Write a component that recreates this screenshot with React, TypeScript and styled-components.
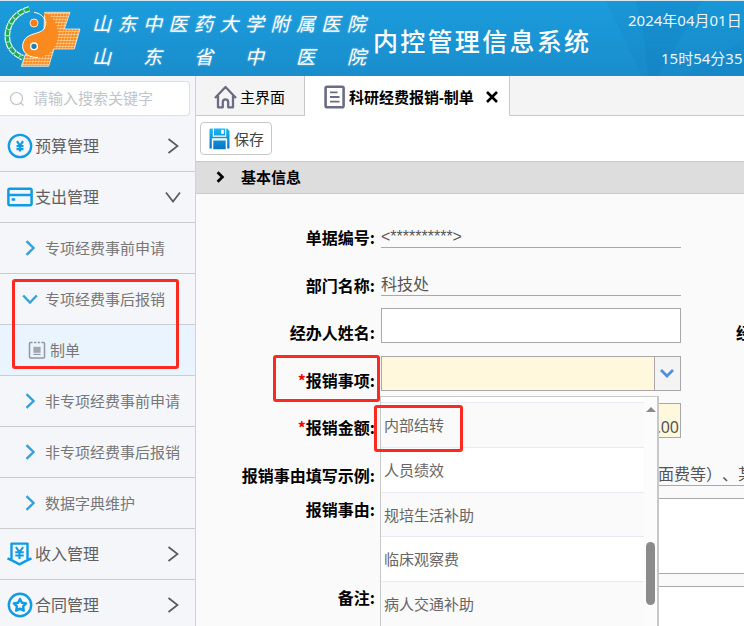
import React from "react";
import styled, { createGlobalStyle, css } from "styled-components";

const ui = `"Noto Sans", "Noto Sans CJK SC", sans-serif`;
const cjk = `"Noto Sans CJK SC", "Noto Sans", sans-serif`;

const GlobalStyle = createGlobalStyle`
  *, *::before, *::after { box-sizing: border-box; }
  body { margin: 0; overflow: hidden; font-family: ${ui}; font-size: 15px; color: #555; background: #fafafa; text-spacing-trim: space-all; }
  button, input, select, textarea { font: inherit; color: inherit; margin: 0; border-radius: 0; }
  button { cursor: pointer; }
  ul { list-style: none; margin: 0; padding: 0; }
`;

const Page = styled.div`
  display: flex;
  flex-direction: column;
  height: 100vh;
  overflow: hidden;
`;

const Header = styled.header`
  display: flex;
  flex: none;
  align-items: center;
  position: relative;
  height: 76px;
  padding-left: 4px;
  border-top: 1px solid #d5e6ee;
  color: #fff;
  background: linear-gradient(#1b9cdc, #1a8dcc);
  overflow: hidden;
`;

const Beams = styled.svg`
  position: absolute;
  top: 0;
  right: 0;
  width: 154px;
  height: 100%;
`;

const Hospital = styled.div`
  display: flex;
  flex-direction: column;
  gap: 7px;
  width: 274px;
  margin: 2px 0 0 10px;
  font: italic 400 19px/26px ${cjk};
  text-shadow: 0 0 2px rgba(255, 255, 255, 0.5);
`;

const SpreadLine = styled.span`
  display: flex;
  justify-content: space-between;
`;

const SystemTitle = styled.h1`
  width: 216px;
  margin: 2px 0 0 7px;
  font: 500 25px/36px ${cjk};
  white-space: nowrap;
`;

const Clock = styled.div`
  position: relative;
  display: flex;
  flex-direction: column;
  gap: 18px;
  width: 116px;
  margin-left: auto;
  line-height: 20px;
  white-space: nowrap;
  color: #eaf5fb;
`;

const ClockTime = styled.time`
  padding-left: 33px;
`;

const Body = styled.div`
  display: flex;
  flex: 1;
  min-height: 0;
`;

const Sidebar = styled.nav`
  flex: none;
  width: 196px;
  border-right: 1px solid #d2d2d6;
  background: #f4f6fa;
  overflow: hidden;
`;

const SearchBox = styled.label`
  display: flex;
  align-items: center;
  gap: 8px;
  height: 35px;
  margin: 5px 5px 5px 0;
  padding-left: 9px;
  border: 1px solid #dcdfe6;
  border-left: 0;
  border-radius: 0 4px 4px 0;
  background: #fff;
  color: #c0c4cc;
`;

const SearchInput = styled.input`
  flex: 1;
  min-width: 0;
  padding: 0 0 2px;
  border: 0;
  outline: 0;
  background: none;
  &::placeholder { color: #c0c4cc; opacity: 1; }
`;

const MenuGroup = styled.div`
  position: relative;
`;

const MenuRow = styled.button<{ $level?: 1 | 2 | 3 }>`
  display: flex;
  align-items: center;
  width: 100%;
  height: 51px;
  border: 0;
  border-bottom: 1px solid #cbccd0;
  background: none;
  text-align: left;
  white-space: nowrap;
  color: #777;
  padding: 0 0 0 20px;
  gap: 5px;
  ${({ $level }) => $level === 1 && css`
    padding: 0 12px 0 7px;
    gap: 2px;
    font-size: 16px;
    color: #606060;
  `}
  ${({ $level }) => $level === 3 && css`
    padding-left: 28px;
    gap: 4px;
    background: #eaf4fe;
  `}
`;

const RowText = styled.span`
  flex: 1;
  padding-bottom: 2px;
`;

const Mark = styled.span<{ $t: number; $r: number; $b: number; $l: number }>`
  position: absolute;
  z-index: 5;
  top: ${(p) => p.$t}px;
  right: ${(p) => p.$r}px;
  bottom: ${(p) => p.$b}px;
  left: ${(p) => p.$l}px;
  border: 3px solid #fb2a20;
  border-radius: 3px;
  pointer-events: none;
`;

const Main = styled.main`
  display: flex;
  flex: 1;
  flex-direction: column;
  min-width: 0;
  background: #fafafa;
`;

const TabStrip = styled.div`
  display: flex;
  flex: none;
  height: 40px;
  background: #f4f4f4;
  &::after { content: ""; flex: 1; border-bottom: 1px solid #c8c8c8; }
`;

const Tab = styled.div<{ $active?: boolean }>`
  display: flex;
  align-items: center;
  padding: 2px 19px 0 18px;
  border-right: 1px solid #c8c8c8;
  border-bottom: 1px solid #c8c8c8;
  color: #000;
  ${({ $active }) => $active && css`
    padding: 2px 9px 0 18px;
    border-bottom-color: #fff;
    background: #fff;
    font-weight: 700;
  `}
`;

const TabButton = styled.button`
  display: flex;
  align-items: center;
  gap: 3px;
  padding: 0;
  border: 0;
  background: none;
  font-size: 15px;
  font-weight: inherit;
  white-space: nowrap;
`;

const CloseButton = styled.button`
  display: flex;
  margin-left: 10px;
  padding: 0;
  border: 0;
  background: none;
`;

const Toolbar = styled.div`
  flex: none;
  height: 45px;
  padding: 6px 4px;
  background: #fff;
`;

const SaveButton = styled.button`
  display: flex;
  align-items: center;
  gap: 4px;
  height: 33px;
  padding: 0 7px 0 8px;
  border: 1px solid #c8c8c8;
  border-radius: 4px;
  background: #fff;
  color: #444;
`;

const SectionBar = styled.button`
  display: flex;
  flex: none;
  align-items: center;
  gap: 15px;
  height: 33px;
  padding: 0 18px 2px;
  border: 0;
  border-top: 1px solid #cacaca;
  border-bottom: 1px solid #cacaca;
  background: #ddd;
  color: #000;
  font-weight: 700;
`;

const Form = styled.form`
  display: flex;
  flex: 1;
  flex-direction: column;
  gap: 12px;
  min-height: 0;
  padding-top: 18px;
  overflow: hidden;
  font-size: 16px;
`;

const FormRow = styled.div<{ $h: number; $top?: boolean }>`
  display: flex;
  flex: none;
  align-items: ${(p) => (p.$top ? "flex-start" : "flex-end")};
  gap: 6px;
  height: ${(p) => p.$h}px;
`;

const Label = styled.label`
  position: relative;
  flex: none;
  width: 179px;
  font: 700 16px/22px ${cjk};
  text-align: right;
  white-space: nowrap;
  color: #000;
`;

const SideLabel = styled.span`
  flex: none;
  width: 16px;
  margin-left: 49px;
  font: 700 16px/22px ${cjk};
  color: #000;
`;

const Star = styled.span`
  color: #f00;
`;

const PlainField = styled.output<{ $wide?: boolean }>`
  flex: ${(p) => (p.$wide ? "1" : "none")};
  width: 300px;
  padding-left: ${(p) => (p.$wide ? 277 : 0)}px;
  border-bottom: 1px solid #a9a9a9;
  font-family: "Liberation Sans", ${cjk};
  line-height: 20px;
  white-space: nowrap;
  overflow: hidden;
  color: #555;
`;

const TextField = styled.input<{ $required?: boolean }>`
  flex: none;
  width: 300px;
  height: 35px;
  padding: ${(p) => (p.$required ? "13px 1px 0" : "0 2px")};
  border: 1px solid #a9a9a9;
  background: ${(p) => (p.$required ? "#fff8dc" : "#fff")};
  text-align: ${(p) => (p.$required ? "right" : "left")};
`;

const LongField = styled.textarea`
  flex: 1;
  height: 76px;
  border: 1px solid #a9a9a9;
  border-right: 0;
  background: #fff;
  resize: none;
`;

const Combo = styled.div`
  position: relative;
  width: 300px;
  height: 35px;
`;

const ComboSelect = styled.select`
  appearance: none;
  width: 100%;
  height: 100%;
  padding: 0 28px 0 2px;
  border: 1px solid #a9a9a9;
  background: #fff8dc;
`;

const ComboArrow = styled.span`
  position: absolute;
  top: 1px;
  right: 1px;
  bottom: 1px;
  display: flex;
  align-items: center;
  justify-content: center;
  width: 26px;
  padding: 0 2px 2px 0;
  border-left: 1px solid #a9a9a9;
  background: #f4f4f4;
  pointer-events: none;
`;

const Popup = styled.div`
  position: absolute;
  z-index: 3;
  top: 40px;
  left: -1px;
  display: flex;
  width: 279px;
  height: 240px;
  border: 1px solid #c8c8c8;
  border-right-width: 2px;
  background: #fff;
`;

const OptionList = styled.ul`
  flex: 1;
  padding-top: 5px;
`;

const Option = styled.li`
  position: relative;
  height: 45px;
  padding-left: 3px;
  border-top: 1px solid #e9e9f4;
  font-size: 15px;
  line-height: 44px;
  color: #666;
  &:nth-child(odd) { background: #fafafa; }
  &:nth-child(3) { height: 44px; }
`;

const ScrollTrack = styled.div`
  display: flex;
  flex-direction: column;
  align-items: center;
  width: 13px;
  padding-top: 10px;
  background: #fcfcfc;
`;

const ScrollUp = styled.span`
  border: 5px solid transparent;
  border-top-width: 0;
  border-bottom-color: #8b8b8b;
`;

const ScrollThumb = styled.span`
  width: 9px;
  height: 63px;
  margin-top: 130px;
  border-radius: 5px;
  background: #8b8b8b;
`;

type ChevronProps = {
  dir: "right" | "down";
  color: string;
  size?: number;
  span?: number;
  depth?: number;
  w?: number;
};

const Chevron = ({ dir, color, size = 20, span = 7, depth = 4.5, w = 2 }: ChevronProps) => (
  <svg width={size} height={size} viewBox="-10 -10 20 20" fill="none" stroke={color} strokeWidth={w}>
    <path d={`M${-depth} ${-span}L${depth} 0L${-depth} ${span}`} transform={dir === "down" ? "rotate(90)" : undefined} />
  </svg>
);

const blue = "#109be3";

const YenCircle = () => (
  <svg width="26" height="26" viewBox="0 0 26 26" fill="none" stroke={blue} strokeWidth="2.3">
    <circle cx="13" cy="13" r="11.2" />
    <path d="M10 8.2l3 4.6 3-4.6M9.5 13.2h7M9.5 16.2h7M13 12.5v6" strokeWidth="2.2" />
  </svg>
);

const CardIcon = () => (
  <svg width="26" height="26" viewBox="0 0 26 26" fill="none" stroke={blue} strokeWidth="2.5">
    <rect x="1.4" y="4.8" width="23.2" height="16.4" rx="1.2" />
    <path d="M1 11h24M4.6 15.6h3.6" />
  </svg>
);

const IncomeIcon = () => (
  <svg width="26" height="26" viewBox="0 0 26 26" fill="none" stroke={blue} strokeWidth="2.4">
    <path d="M4.5 18V2.6h16V18M.5 17.4L5 19.4l7.5 4 7.5-4 4.5-2" strokeLinejoin="round" />
    <path d="M8.8 6.2l3.7 4.6 3.7-4.6M8.3 11.2h8.4M8.3 14.4h8.4M12.5 11v7" strokeWidth="2" />
  </svg>
);

const ContractIcon = () => (
  <svg width="26" height="26" viewBox="0 0 26 26" fill="none" stroke={blue} strokeWidth="2.4" strokeLinejoin="round">
    <circle cx="13" cy="13" r="11.2" />
    <path d="M13 7l1.9 3.8 4.2.6-3 3 .7 4.2-3.8-2-3.8 2 .7-4.2-3-3 4.2-.6z" />
  </svg>
);

const FormIcon = () => (
  <svg width="18" height="20" viewBox="0 0 18 20" fill="none" stroke="#94979c" strokeWidth="1.5">
    <path d="M4.6 2.5H2.5a1 1 0 0 0-1 1V17a1 1 0 0 0 1 1h13a1 1 0 0 0 1-1V3.5a1 1 0 0 0-1-1h-2.1M6 2.5h2.3M9.8 2.5h2.3" />
    <path d="M5.4 6.8h7.2v6H5.4z" fill="#a4a7ac" stroke="none" />
    <path d="M5.4 14.4h7.2" strokeWidth="1.2" />
  </svg>
);

const HomeIcon = () => (
  <svg width="23" height="24" viewBox="0 0 23 24" fill="none" stroke="#6b6b85" strokeWidth="2.3" strokeLinejoin="round">
    <path d="M1 13L11.5 2 22 13M4 10.8V22.3h4.8V17a2.7 2.7 0 0 1 5.4 0v5.3H19V10.8" />
  </svg>
);

const DocIcon = () => (
  <svg width="23" height="24" viewBox="0 0 23 24" fill="none" stroke="#6b6b85" strokeWidth="2.6">
    <rect x="2.6" y="1.8" width="18" height="20.4" rx="1.5" />
    <path d="M7 7.4h7.5M7 12h9.5M7 16.6h9.5" strokeWidth="1.8" />
  </svg>
);

const SaveIcon = () => (
  <svg width="21" height="22" viewBox="0 0 21 22">
    <defs>
      <linearGradient id="disk" x1="0" y1="0" x2="0" y2="1">
        <stop offset="0" stopColor="#19b6f5" />
        <stop offset="1" stopColor="#0b72c4" />
      </linearGradient>
    </defs>
    <path d="M1.5.5H3.8v8.2h13.4V.5h1.1L20.5 3v17.5h-2.3V11.2a1 1 0 0 0-1-1H3.8a1 1 0 0 0-1 1v9.3H.5V1.5z" fill="url(#disk)" />
    <path d="M5 .5h11.2v7H5zM4.3 12.4h12.4v8.8H4.3z" fill="url(#disk)" />
    <path d="M12.2 1.8h2.6v4h-2.6z" fill="#fff" />
  </svg>
);

const Logo = () => (
  <svg width="78" height="72" viewBox="12 6 234 216" fill="none">
    <defs>
      <pattern id="mesh" width="9" height="9" patternUnits="userSpaceOnUse" patternTransform="skewX(-12)">
        <rect width="9" height="9" fill="#fa8a1d" />
        <path d="M0 0H9M0 0V9" stroke="#ffdcae" strokeWidth="3" />
      </pattern>
    </defs>
    <path d="M134 34H210L193 84H240L223 144H162L146 196H64L76 160L130 130Z" fill="url(#mesh)" stroke="#fff" strokeWidth="2" />
    <path d="M88 24C50 32 22 66 22 106C22 136 40 158 68 170" stroke="#e9fff0" strokeWidth="17" strokeDasharray="17 2" />
    <path d="M88 24C50 32 22 66 22 106C22 136 40 158 68 170" stroke="#20ab50" strokeWidth="10" strokeDasharray="15 4" />
    <path d="M130 36C142 52 142 66 136 78C128 100 104 94 88 104C66 116 62 140 74 154C90 176 122 170 142 160C162 148 176 122 174 92C170 62 152 40 130 36Z" fill="#fa8a1d" />
    <path d="M102 34C128 38 140 56 135 76C130 96 108 94 88 104C68 114 62 138 74 154C84 166 98 170 114 169" stroke="#fff" strokeWidth="3" />
    <circle cx="102" cy="66" r="12" fill="#fa7a13" stroke="#ffe6cc" strokeWidth="3" />
    <circle cx="102" cy="136" r="10" fill="#207ea9" stroke="#fff" strokeWidth="4" />
  </svg>
);

const subMenus = ["非专项经费事前申请", "非专项经费事后报销", "数据字典维护"];
const choices = ["内部结转", "人员绩效", "规培生活补助", "临床观察费", "病人交通补助"];

const Spread = ({ text }: { text: string }) => (
  <SpreadLine>{Array.from(text).map((c, i) => <span key={i}>{c}</span>)}</SpreadLine>
);

const TopMenu = ({ icon, text, open }: { icon: React.ReactNode; text: string; open?: boolean }) => (
  <MenuRow type="button" $level={1} aria-expanded={!!open}>
    {icon}
    <RowText>{text}</RowText>
    <Chevron dir={open ? "down" : "right"} color="#5a5a5a" w={1.7} />
  </MenuRow>
);

const SubMenu = ({ text, open }: { text: string; open?: boolean }) => (
  <MenuRow type="button" aria-expanded={!!open}>
    <Chevron dir={open ? "down" : "right"} color="#35a0de" w={2.4} span={6.8} depth={3.5} />
    <RowText>{text}</RowText>
  </MenuRow>
);

export default function App() {
  return (
    <Page>
      <GlobalStyle />
      <Header>
        <Beams viewBox="0 0 154 76" preserveAspectRatio="none" fill="#0b79b9">
          <path d="M16 0H154V76H52Z" opacity="0.14" />
          <path d="M46 0H112L68 76H58L53 30Z" opacity="0.2" />
          <path d="M92 76L154 40V76Z" opacity="0.1" />
        </Beams>
        <Logo />
        <Hospital>
          <Spread text="山东中医药大学附属医院" />
          <Spread text="山东省中医院" />
        </Hospital>
        <SystemTitle><Spread text="内控管理信息系统" /></SystemTitle>
        <Clock>
          <time>2024年04月01日</time>
          <ClockTime>15时54分35</ClockTime>
        </Clock>
      </Header>
      <Body>
        <Sidebar>
          <SearchBox>
            <svg width="16" height="16" viewBox="0 0 16 16" fill="none" stroke="currentColor" strokeWidth="1.2">
              <circle cx="7.5" cy="7.5" r="6" />
              <path d="M12 12l2.5 2.5" />
            </svg>
            <SearchInput type="text" aria-label="搜索" placeholder="请输入搜索关键字" />
          </SearchBox>
          <TopMenu icon={<YenCircle />} text="预算管理" />
          <TopMenu icon={<CardIcon />} text="支出管理" open />
          <SubMenu text="专项经费事前申请" />
          <MenuGroup>
            <SubMenu text="专项经费事后报销" open />
            <MenuRow type="button" $level={3}>
              <FormIcon />
              <RowText>制单</RowText>
            </MenuRow>
            <Mark $t={5} $r={16} $b={7} $l={12} />
          </MenuGroup>
          {subMenus.map((t) => <SubMenu key={t} text={t} />)}
          <TopMenu icon={<IncomeIcon />} text="收入管理" />
          <TopMenu icon={<ContractIcon />} text="合同管理" />
        </Sidebar>
        <Main>
          <TabStrip>
            <Tab>
              <TabButton type="button"><HomeIcon />主界面</TabButton>
            </Tab>
            <Tab $active>
              <TabButton type="button"><DocIcon />科研经费报销-制单</TabButton>
              <CloseButton type="button" aria-label="关闭">
                <svg width="16" height="16" viewBox="0 0 16 16" stroke="#000" strokeWidth="2.6">
                  <path d="M3 3l10 10M13 3L3 13" />
                </svg>
              </CloseButton>
            </Tab>
          </TabStrip>
          <Toolbar>
            <SaveButton type="button"><SaveIcon />保存</SaveButton>
          </Toolbar>
          <SectionBar type="button" aria-expanded="true">
            <Chevron dir="right" color="#000" size={12} span={8} depth={4} w={4.6} />
            基本信息
          </SectionBar>
          <Form>
            <FormRow $h={36}>
              <Label htmlFor="code">单据编号:</Label>
              <PlainField id="code">&lt;**********&gt;</PlainField>
            </FormRow>
            <FormRow $h={36}>
              <Label htmlFor="dept">部门名称:</Label>
              <PlainField id="dept">科技处</PlainField>
            </FormRow>
            <FormRow $h={35}>
              <Label htmlFor="agent">经办人姓名:</Label>
              <TextField id="agent" type="text" />
              <SideLabel>经</SideLabel>
            </FormRow>
            <FormRow $h={36}>
              <Label htmlFor="item">
                <Star>*</Star>报销事项:
                <Mark $t={-14} $r={-5} $b={-11} $l={77} />
              </Label>
              <Combo>
                <ComboSelect id="item" defaultValue=""><option value="" /></ComboSelect>
                <ComboArrow><Chevron dir="down" color="#4e90da" size={20} span={6} depth={3} w={2.8} /></ComboArrow>
                <Popup>
                  <OptionList role="listbox" aria-label="报销事项">
                    {choices.map((c, i) => (
                      <Option key={c} role="option" aria-selected={false}>
                        {c}
                        {i === 0 && <Mark $t={2} $r={181} $b={-5} $l={-7} />}
                      </Option>
                    ))}
                  </OptionList>
                  <ScrollTrack>
                    <ScrollUp />
                    <ScrollThumb />
                  </ScrollTrack>
                </Popup>
              </Combo>
            </FormRow>
            <FormRow $h={35}>
              <Label htmlFor="amount"><Star>*</Star>报销金额:</Label>
              <TextField id="amount" type="text" defaultValue="0.00" $required />
            </FormRow>
            <FormRow $h={36}>
              <Label htmlFor="sample">报销事由填写示例:</Label>
              <PlainField id="sample" $wide>面费等）、某</PlainField>
            </FormRow>
            <FormRow $h={76} $top>
              <Label htmlFor="reason">报销事由:</Label>
              <LongField id="reason" />
            </FormRow>
            <FormRow $h={76} $top>
              <Label htmlFor="remark">备注:</Label>
              <LongField id="remark" />
            </FormRow>
          </Form>
        </Main>
      </Body>
    </Page>
  );
}
